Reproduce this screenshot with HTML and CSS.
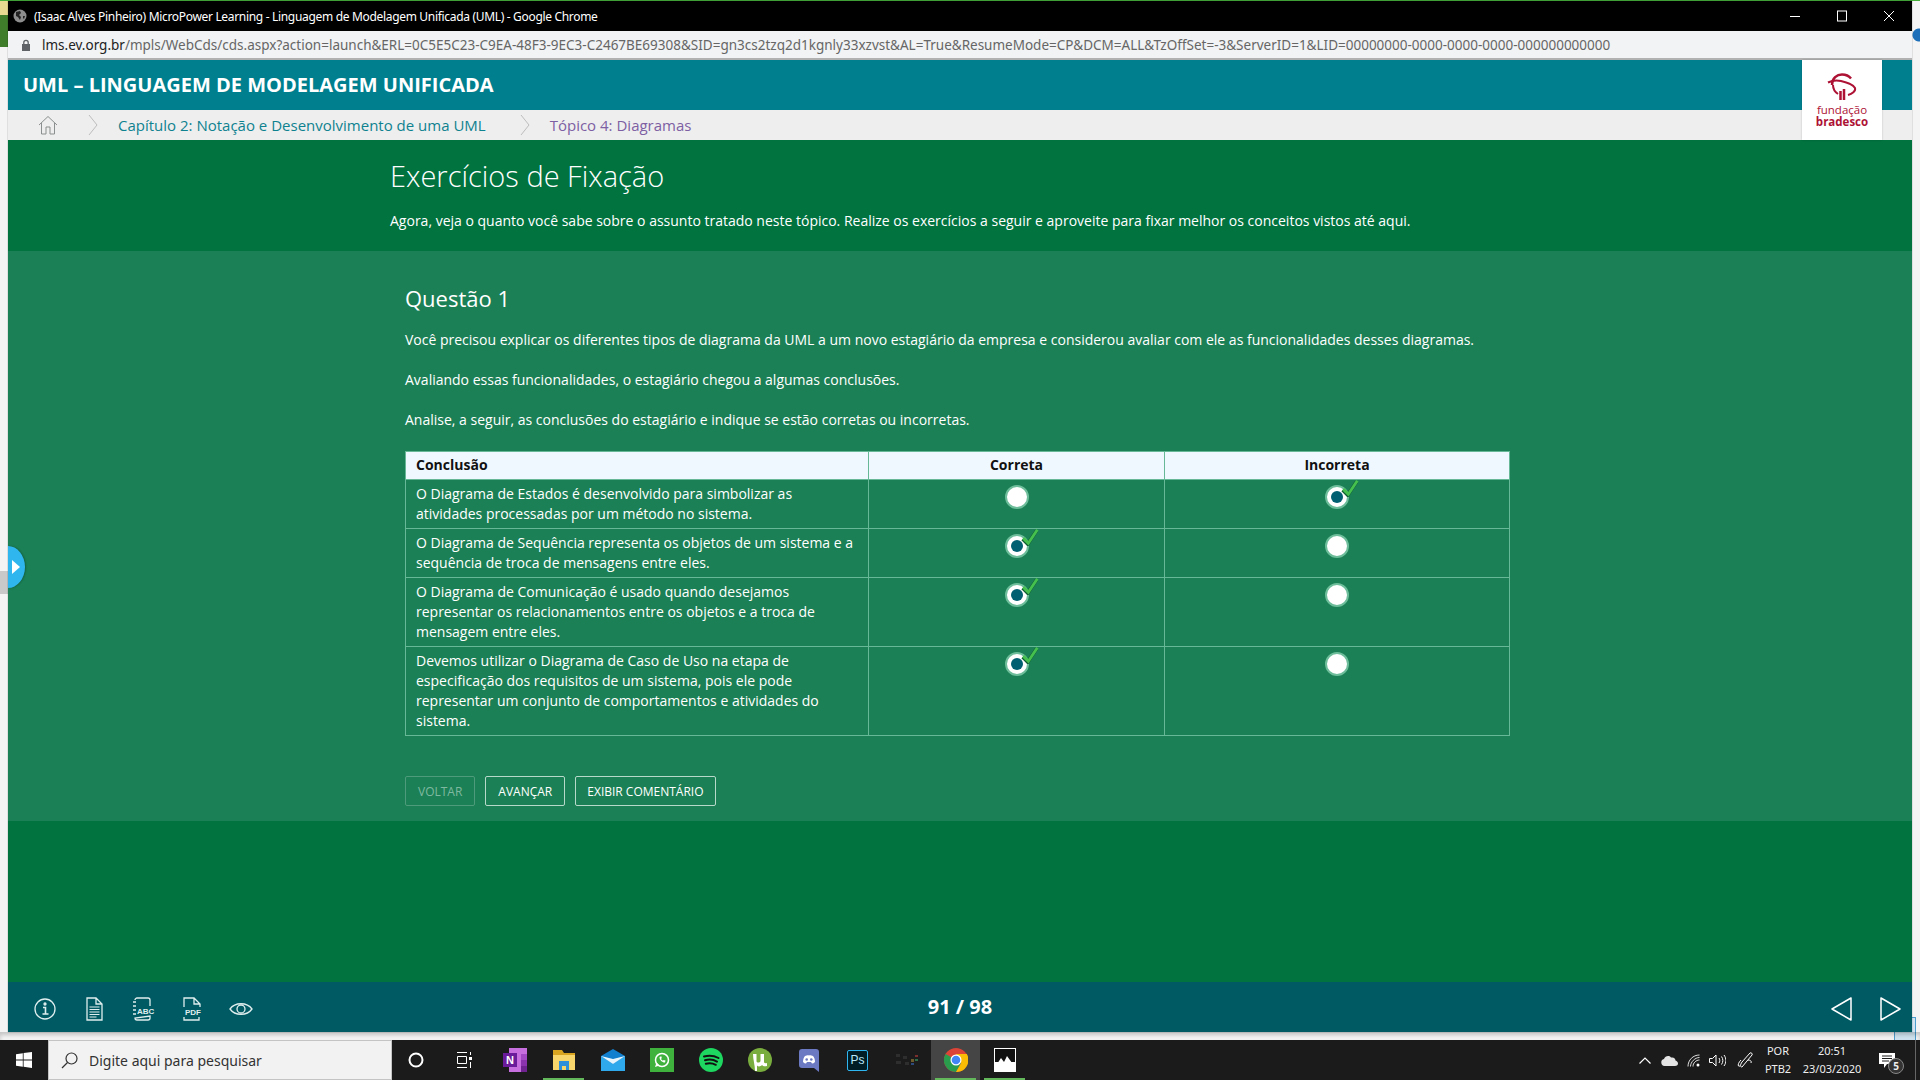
FILE: index.html
```html
<!DOCTYPE html>
<html>
<head>
  <meta charset="utf-8">
  <title>UML - Linguagem de Modelagem Unificada</title>
  <link rel="stylesheet" href="styles.css">
</head>
<body>
<svg class="defs" width="0" height="0">
  <symbol id="check" viewBox="0 0 16 16">
    <path d="M2 9l4.500 4.500L14.500 1.500" fill="none" stroke="#0f5c33" stroke-width="3.200" transform="translate(-0.500 0.800)"/>
    <path d="M2 9l4.500 4.500L14.500 1.500" fill="none" stroke="#45c04f" stroke-width="2.600"/>
  </symbol>
</svg>

<div class="screen">
  <div class="snap-hint"></div>

  <div class="window">
    <div class="titlebar">
      <svg class="globe" width="14" height="14" viewBox="0 0 14 14"><circle cx="7" cy="7" r="6.500" fill="#8d8d8d"/><path d="M3 3l4-1 1 2-2 2 2 2-1 3-2-3-2-1zM10 7l2 0-1 3-1-1z" fill="#222"/></svg>
      <span class="titlebar-text">(Isaac Alves Pinheiro) MicroPower Learning - Linguagem de Modelagem Unificada (UML) - Google Chrome</span>
      <div class="win-controls">
        <svg width="12" height="12" viewBox="0 0 12 12"><path d="M1 6.500h10" stroke="#fff"/></svg>
        <svg width="12" height="12" viewBox="0 0 12 12"><rect x="1.500" y="1" width="9" height="10" fill="none" stroke="#fff"/></svg>
        <svg width="12" height="12" viewBox="0 0 12 12"><path d="M1 1l10 10M11 1L1 11" stroke="#fff"/></svg>
      </div>
    </div>

    <div class="addressbar">
      <svg width="10" height="12" viewBox="0 0 10 12"><rect x="1" y="5" width="8" height="7" fill="#5f6368"/><path d="M2.800 5V3.500a2.200 2.200 0 0 1 4.400 0V5" fill="none" stroke="#5f6368" stroke-width="1.300"/></svg>
      <span class="url"><span class="url-host">lms.ev.org.br</span>/mpls/WebCds/cds.aspx?action=launch&amp;ERL=0C5E5C23-C9EA-48F3-9EC3-C2467BE69308&amp;SID=gn3cs2tzq2d1kgnly33xzvst&amp;AL=True&amp;ResumeMode=CP&amp;DCM=ALL&amp;TzOffSet=-3&amp;ServerID=1&amp;LID=00000000-0000-0000-0000-000000000000</span>
    </div>

    <div class="course-bar">
      <h1>UML – LINGUAGEM DE MODELAGEM UNIFICADA</h1>
    </div>

    <div class="breadcrumb">
      <svg class="home" width="20" height="20" viewBox="0 0 20 20" fill="none" stroke="#8b8f8f"><path d="M1 10L10 1.500 19 10M3.500 8v11h4.500v-7h4v7h4.500V8"/></svg>
      <svg class="crumb-sep" width="10" height="22" viewBox="0 0 10 22" fill="none" stroke="#bdbdbd"><path d="M1 1l8 10-8 10"/></svg>
      <span class="crumb-chapter">Capítulo 2: Notação e Desenvolvimento de uma UML</span>
      <svg class="crumb-sep" width="10" height="22" viewBox="0 0 10 22" fill="none" stroke="#bdbdbd"><path d="M1 1l8 10-8 10"/></svg>
      <span class="crumb-topic">Tópico 4: Diagramas</span>
    </div>

    <div class="logo">
      <svg width="30" height="28" viewBox="0 0 30 28" fill="none" stroke="#ad1235">
        <path d="M1 9.500C6 7 10 7 14 8c6 1.500 12 3 14 7 1 3-3 6-7 7" stroke-width="2"/>
        <path d="M5 12C5 5 10 1.500 15 1.500c4 0 7 1.500 9 4" stroke-width="2.500"/>
        <path d="M6 12c0 4 2 7 5 9" stroke-width="2"/>
        <path d="M13.500 18v9M17 16v11" stroke-width="2.500"/>
      </svg>
      <span class="logo-light">fundação</span>
      <span class="logo-bold">bradesco</span>
    </div>

    <div class="side-tab">
      <svg width="8" height="14" viewBox="0 0 8 14"><path d="M0 0l8 7-8 7z" fill="#fff"/></svg>
    </div>

    <section class="intro">
      <h2>Exercícios de Fixação</h2>
      <p>Agora, veja o quanto você sabe sobre o assunto tratado neste tópico. Realize os exercícios a seguir e aproveite para fixar melhor os conceitos vistos até aqui.</p>
    </section>

    <section class="question">
      <h3>Questão 1</h3>
      <p>Você precisou explicar os diferentes tipos de diagrama da UML a um novo estagiário da empresa e considerou avaliar com ele as funcionalidades desses diagramas.</p>
      <p>Avaliando essas funcionalidades, o estagiário chegou a algumas conclusões.</p>
      <p>Analise, a seguir, as conclusões do estagiário e indique se estão corretas ou incorretas.</p>

      <table class="answers">
        <colgroup><col class="col-text"><col class="col-a"><col class="col-b"></colgroup>
        <tr>
          <th class="th-left">Conclusão</th>
          <th>Correta</th>
          <th>Incorreta</th>
        </tr>
        <tr>
          <td>O Diagrama de Estados é desenvolvido para simbolizar as atividades processadas por um método no sistema.</td>
          <td class="opt"><span class="radio"></span></td>
          <td class="opt"><span class="radio selected"><svg class="tick"><use href="#check"/></svg></span></td>
        </tr>
        <tr>
          <td>O Diagrama de Sequência representa os objetos de um sistema e a sequência de troca de mensagens entre eles.</td>
          <td class="opt"><span class="radio selected"><svg class="tick"><use href="#check"/></svg></span></td>
          <td class="opt"><span class="radio"></span></td>
        </tr>
        <tr>
          <td>O Diagrama de Comunicação é usado quando desejamos representar os relacionamentos entre os objetos e a troca de mensagem entre eles.</td>
          <td class="opt"><span class="radio selected"><svg class="tick"><use href="#check"/></svg></span></td>
          <td class="opt"><span class="radio"></span></td>
        </tr>
        <tr>
          <td>Devemos utilizar o Diagrama de Caso de Uso na etapa de especificação dos requisitos de um sistema, pois ele pode representar um conjunto de comportamentos e atividades do sistema.</td>
          <td class="opt"><span class="radio selected"><svg class="tick"><use href="#check"/></svg></span></td>
          <td class="opt"><span class="radio"></span></td>
        </tr>
      </table>

      <div class="actions">
        <button class="btn btn-off">VOLTAR</button>
        <button class="btn">AVANÇAR</button>
        <button class="btn">EXIBIR COMENTÁRIO</button>
      </div>
    </section>

    <div class="filler"></div>

    <footer class="player">
      <div class="tools">
        <svg width="24" height="24" viewBox="0 0 24 24" fill="none" stroke="#dfeeee" stroke-width="1.300"><circle cx="12" cy="12" r="10"/><path d="M10 10.500h2.500V17M9.500 17h6" stroke-width="1.600"/><circle cx="12" cy="7" r="1" fill="#dfeeee"/></svg>
        <svg width="24" height="24" viewBox="0 0 24 24" fill="none" stroke="#dfeeee" stroke-width="1.300"><path d="M5 1h9l6 6v16H5zM14 1v6h6"/><path d="M7.500 10h10M7.500 12.500h10M7.500 15h10M7.500 17.500h10M7.500 20h7" stroke-width="1.200"/></svg>
        <svg width="24" height="24" viewBox="0 0 24 24" fill="none" stroke="#dfeeee" stroke-width="1.300"><path d="M4 3c0-1 1-2 2-2h11c1 0 2 1 2 2v6M19 19v2c0 1-1 2-2 2H6c-1 0-2-1-2-2z"/><path d="M2 5h3M2 9h3M2 13h3M2 17h3"/><text x="6" y="17" class="tool-label">ABC</text></svg>
        <svg width="24" height="24" viewBox="0 0 24 24" fill="none" stroke="#dfeeee" stroke-width="1.300"><path d="M4 10V1h10l6 6v3M14 1v6h6M4 20v3h15v-3"/><text x="5" y="18" class="tool-label">PDF</text></svg>
        <svg width="24" height="24" viewBox="0 0 24 24" fill="none" stroke="#dfeeee" stroke-width="1.300"><path d="M1 12c5-7 17-7 22 0-5 7-17 7-22 0z"/><circle cx="12" cy="12" r="4"/></svg>
      </div>
      <div class="pages">91 / 98</div>
      <div class="pager">
        <svg width="21" height="24" viewBox="0 0 21 24" fill="none" stroke="#fff" stroke-width="1.500" stroke-linejoin="round"><path d="M20 1v22L1 12z"/></svg>
        <svg width="21" height="24" viewBox="0 0 21 24" fill="none" stroke="#fff" stroke-width="1.500" stroke-linejoin="round"><path d="M1 1v22l19-11z"/></svg>
      </div>
    </footer>
  </div>

  <div class="under-window"></div>

  <div class="taskbar">
    <div class="start">
      <svg width="16" height="16" viewBox="0 0 16 16" fill="#fff"><path d="M0 2.200l6.800-1v6.400H0zM7.600 1.100L16 0v7.600H7.600zM0 8.400h6.800v6.400l-6.800-1zM7.600 8.400H16V16l-8.400-1.200z"/></svg>
    </div>
    <div class="search">
      <svg width="17" height="17" viewBox="0 0 17 17" fill="none" stroke="#333" stroke-width="1.200"><circle cx="10.500" cy="6.500" r="5.500"/><path d="M6.500 10.500L1 16"/></svg>
      <span>Digite aqui para pesquisar</span>
    </div>
    <div class="task-btn">
      <svg width="16" height="16" viewBox="0 0 16 16" fill="none" stroke="#fff" stroke-width="2"><circle cx="8" cy="8" r="6.500"/></svg>
    </div>
    <div class="task-btn">
      <svg width="16" height="18" viewBox="0 0 16 18" fill="none" stroke="#fff"><path d="M1 1.500h10M1 16.500h10M1.500 5.500h9v7h-9z"/><rect x="13" y="6" width="3" height="3" fill="#fff" stroke="none"/><path d="M14.500 1v3M14.500 11v6"/></svg>
    </div>
    <div class="apps">
      <div class="task-btn">
        <svg width="24" height="24" viewBox="0 0 24 24"><rect x="6" y="0" width="18" height="24" fill="#c86fe0"/><rect x="18" y="6" width="6" height="6" fill="#a349c4"/><rect x="18" y="12" width="6" height="6" fill="#8b33ad"/><rect x="18" y="18" width="6" height="6" fill="#6f2390"/><rect x="0" y="5" width="14" height="14" fill="#6a1b9a"/><text x="3" y="16" class="app-letter">N</text></svg>
      </div>
      <div class="task-btn open">
        <svg width="22" height="20" viewBox="0 0 22 20"><path d="M0 0h9l2 3h11v17H0z" fill="#d9a520"/><path d="M0 5h22v15H0z" fill="#f9d66c"/><path d="M6 11h10v9h-3v-4h-4v4H6z" fill="#2f8fd8"/></svg>
      </div>
      <div class="task-btn">
        <svg width="24" height="24" viewBox="0 0 24 24"><path d="M12 1l12 7v15H0V8z" fill="#1380cf"/><path d="M0 8l12 8 12-8v15H0z" fill="#30a8ec"/><path d="M0 8l12 8 12-8-12 3z" fill="#e8f5fd"/></svg>
      </div>
      <div class="task-btn">
        <svg width="24" height="24" viewBox="0 0 24 24"><rect width="24" height="24" fill="#3fb13d"/><circle cx="12" cy="12" r="6.500" fill="none" stroke="#fff" stroke-width="1.500"/><path d="M5 19l1.500-4.500 3 3zM9.500 9c0 3 2.500 5.500 5.500 5.500l.5-2-2-.5-.5.800c-1-.5-1.500-1-2-2l.8-.500-.5-2z" fill="#fff"/></svg>
      </div>
      <div class="task-btn">
        <svg width="24" height="24" viewBox="0 0 24 24"><circle cx="12" cy="12" r="12" fill="#1ed760"/><path d="M5 8.500c5-1.500 10-1 14.500 1.500M6 12.300c4-1.200 8.500-.8 12 1.300M6.800 15.800c3.500-1 7-.6 10 1" fill="none" stroke="#111" stroke-width="2" stroke-linecap="round"/></svg>
      </div>
      <div class="task-btn">
        <svg width="24" height="24" viewBox="0 0 24 24"><circle cx="12" cy="12" r="12" fill="#79ad3d"/><path d="M5 6h3.500v7c0 2 3.500 2 4 0V6H16v8c0 1 1 1.500 3 1v3c-2 .5-4 .5-5-1-2 2-4 1.500-5 .5V23H7C7 17 5 12 5 6z" fill="#fff"/></svg>
      </div>
      <div class="task-btn">
        <svg width="20" height="23" viewBox="0 0 20 23"><path d="M3 0h14c2 0 3 1 3 3v20l-5-4H3c-2 0-3-1-3-3V3c0-2 1-3 3-3z" fill="#6b78c2"/><path d="M4 13c0-3 1-5 2-6 2-1 3-1 4-.5 1-.5 2-.5 4 .5 1 1 2 3 2 6-1 1-2 1.500-3 1.500l-1-1.500H8l-1 1.500C6 14.500 5 14 4 13z" fill="#fff"/><circle cx="7.700" cy="10.500" r="1.300" fill="#6b78c2"/><circle cx="12.300" cy="10.500" r="1.300" fill="#6b78c2"/></svg>
      </div>
      <div class="task-btn">
        <div class="ps-icon">Ps</div>
      </div>
      <div class="task-btn">
        <svg width="22" height="14" viewBox="0 0 22 14" fill="#2e2e2e"><rect x="0" y="1" width="4" height="3"/><rect x="7" y="3" width="4" height="3"/><rect x="0" y="8" width="5" height="3"/><rect x="9" y="9" width="4" height="3"/><rect x="15" y="6" width="3" height="3" fill="#6d5b2c"/><rect x="19" y="2" width="3" height="2" fill="#7a2e2e"/><rect x="19" y="6" width="3" height="2" fill="#2e6d4a"/><rect x="15" y="10" width="3" height="2" fill="#2e4a7a"/></svg>
      </div>
      <div class="task-btn open active">
        <svg width="24" height="24" viewBox="0 0 24 24"><circle cx="12" cy="12" r="12" fill="#db4437"/><path d="M12 12L1.600 6A12 12 0 0 0 12 24l5-9z" fill="#2a9d4c"/><path d="M12 6h10.800A12 12 0 0 1 12 24l5.200-9z" fill="#fbbc05"/><circle cx="12" cy="12" r="5.500" fill="#fff"/><circle cx="12" cy="12" r="4.300" fill="#4285f4"/></svg>
      </div>
      <div class="task-btn open">
        <svg width="22" height="24" viewBox="0 0 22 24"><rect width="22" height="24" fill="#fff"/><rect x="1" y="1" width="20" height="13" fill="#111"/><path d="M1 19l6-9 3 4 3-6 8 11v1H1z" fill="#fff"/></svg>
      </div>
    </div>

    <div class="tray">
      <div class="tray-item w-24">
        <svg width="12" height="7" viewBox="0 0 12 7" fill="none" stroke="#fff" stroke-width="1.200"><path d="M0.500 6.500L6 1l5.500 5.500"/></svg>
      </div>
      <div class="tray-item w-25">
        <svg width="17" height="11" viewBox="0 0 17 11"><path d="M3.500 11a3.500 3.500 0 0 1-.5-6.900C4 1 8 0 10 2.500c3-.5 4.500 1 4.500 3 1.500.5 2.500 1.500 2.500 3S16 11 14 11z" fill="#e3e3e3"/></svg>
      </div>
      <div class="tray-item w-23">
        <svg width="13" height="13" viewBox="0 0 13 13" fill="none" stroke="#ddd"><path d="M1 12.500C1 6 6 1 12.500 1M3.500 12.500C3.500 8 8 3.500 12.500 3.500M6 12.500C6 9 9 6 12.500 6"/><circle cx="11" cy="11" r="1.500" fill="#fff" stroke="none"/></svg>
      </div>
      <div class="tray-item w-24">
        <svg width="17" height="13" viewBox="0 0 17 13" fill="none" stroke="#fff"><path d="M0.500 4.500h3L7 1v11L3.500 8.500h-3zM10 4c1 1.500 1 3.500 0 5M12.500 2.500c1.800 2.500 1.800 5.500 0 8M15 1c2.500 3.500 2.500 7.500 0 11"/></svg>
      </div>
      <div class="tray-item w-20 pen-gap">
        <svg width="17" height="17" viewBox="0 0 17 17" fill="none" stroke="#fff"><path d="M3 14c-3 1-2-3 1-6M5 15L15 3c1-1-1-3-2-2L5 10c-2 3-2 5 0 5zM11 8c2 0 4 1 3 3"/></svg>
      </div>
      <div class="tray-lang">POR<br>PTB2</div>
      <div class="tray-clock">20:51<br>23/03/2020</div>
      <div class="tray-notify">
        <svg width="16" height="15" viewBox="0 0 16 15"><path d="M0 0h16v11H8l-3 4v-4H0z" fill="#fff"/><path d="M3 3h10M3 5.500h10M3 8h7" stroke="#1b1b1b"/></svg>
        <span class="notify-count">5</span>
      </div>
      <div class="show-desktop"></div>
    </div>
  </div>
</div>
</body>
</html>
```

FILE: styles.css
```css
* {
  box-sizing: border-box;
}

html, body {
  margin: 0;
  padding: 0;
  height: 100%;
  overflow: hidden;
}

body {
  font-family: 'Open Sans', 'Noto Sans', sans-serif;
  font-size: 14px;
  color: #fff;
}

.defs {
  position: absolute;
}

.screen {
  position: relative;
  height: 1080px;
  display: flex;
  flex-direction: column;
  background:
    radial-gradient(circle at 1919px 34px, #1c6fb8 6px, transparent 7px),
    linear-gradient(to bottom, #e8d990 0, #e8d990 14px, #3f7d2a 14px, #3f7d2a 46px, #f4f4f4 46px, #f4f4f4 570px, #c9c9c9 570px, #c9c9c9 593px, #f4f4f4 593px) left top / 8px 100% no-repeat,
    #f4f4f4;
  border-top: 1px solid #45ad3a;
}

/* window */
.window {
  position: relative;
  flex: 1;
  margin: 0 8px 0 8px;
  display: flex;
  flex-direction: column;
  box-shadow: 0 0 1px rgba(0, 0, 0, 0.5);
}

.titlebar {
  height: 30px;
  background-color: #000;
  display: flex;
  align-items: center;
  padding-left: 5px;
  font-size: 12px;
}

.titlebar-text {
  margin-left: 7px;
  font-family: 'Noto Sans', sans-serif;
  letter-spacing: -0.32px;
}

.win-controls {
  margin-left: auto;
  display: flex;
  gap: 35px;
  padding-right: 17px;
}

.addressbar {
  height: 29px;
  background-color: #f1f3f4;
  border-bottom: 2px solid #b1b1b1;
  display: flex;
  align-items: center;
  padding-left: 13px;
  color: #666;
  font-family: 'Noto Sans', sans-serif;
  font-size: 13.500px;
}

.url {
  margin-left: 11px;
  white-space: nowrap;
}

.url-host {
  color: #222;
}

.course-bar {
  height: 50px;
  background-color: #00808f;
  display: flex;
  align-items: center;
  padding: 0 0 2px 15px;
}

.course-bar h1 {
  margin: 0;
  font-size: 20px;
  font-weight: 700;
}

.breadcrumb {
  height: 30px;
  background-color: #eee;
  display: flex;
  align-items: center;
  padding-left: 30px;
  font-size: 15px;
}

.crumb-sep {
  margin: 0 20px 0 30px;
}

.crumb-chapter + .crumb-sep {
  margin-left: 34px;
}

.crumb-chapter {
  color: #0f8290;
}

.crumb-topic {
  color: #7d5fa3;
}

.logo {
  position: absolute;
  top: 59px;
  left: 1794px;
  width: 80px;
  height: 80px;
  background-color: #fff;
  box-shadow: 0 0 2px rgba(0, 0, 0, 0.2);
  display: flex;
  flex-direction: column;
  align-items: center;
  padding-top: 13px;
  color: #ad1235;
  font-size: 11.500px;
  line-height: 13px;
}

.logo-light {
  margin-top: 2px;
  font-weight: 400;
}

.logo-bold {
  font-weight: 700;
  margin-top: -1px;
}

.side-tab {
  position: absolute;
  left: 0;
  top: 545px;
  width: 17px;
  height: 42px;
  background-color: #2fb6ef;
  border-radius: 0 17px 17px 0 / 0 21px 21px 0;
  box-shadow: 1px 0 2px rgba(0, 0, 0, 0.25);
  display: flex;
  align-items: center;
  padding-left: 4px;
}

/* page */
.intro {
  height: 111px;
  background-color: #00733f;
  padding: 17px 0 0 382px;
}

.intro h2 {
  margin: 0;
  font-size: 29px;
  line-height: 38px;
  font-weight: 300;
}

.intro p {
  margin: 16px 0 0;
  line-height: 20px;
}

.question {
  background-color: #1b8055;
  padding: 33px 0 15px 397px;
}

.question h3 {
  margin: 0 0 18px;
  font-size: 22px;
  line-height: 28px;
  font-weight: 400;
}

.question p {
  margin: 0 0 20px;
  line-height: 20px;
}

.answers {
  width: 1104px;
  margin-top: 21px;
  border-collapse: collapse;
  table-layout: fixed;
  line-height: 20px;
}

.col-text {
  width: 463px;
}

.col-a {
  width: 296px;
}

.col-b {
  width: 345px;
}

.answers th,
.answers td {
  border: 1px solid #67b897;
  padding: 4px 10px;
  vertical-align: top;
}

.answers th {
  background-color: #f0f8ff;
  color: #111;
  font-weight: 700;
  height: 28px;
  line-height: 20px;
  padding-top: 3px;
}

.answers .th-left {
  text-align: left;
}

.answers td.opt {
  text-align: center;
  padding: 5px 0 0;
}

.radio {
  position: relative;
  display: inline-block;
  vertical-align: top;
  width: 24px;
  height: 24px;
  border-radius: 50%;
  background-color: #fff;
  border: 2px solid #6dbd9b;
}

.radio.selected::before {
  content: "";
  position: absolute;
  left: 4px;
  top: 4px;
  width: 12px;
  height: 12px;
  border-radius: 50%;
  background-color: #005f70;
}

.tick {
  position: absolute;
  left: 14px;
  top: -8px;
  width: 18px;
  height: 18px;
}

.actions {
  display: flex;
  gap: 10px;
  margin-top: 40px;
}

.btn {
  height: 30px;
  padding: 0 12px;
  font-family: inherit;
  font-size: 12px;
  color: #fff;
  background-color: transparent;
  border: 1px solid #b7d9ca;
  border-radius: 2px;
}

.btn:last-child {
  padding: 0 11px;
}

.btn-off {
  color: #7fb8a0;
  border-color: #4d9b7b;
}

.filler {
  flex: 1;
  background-color: #00733f;
}

/* bottom bar of the player */
.player {
  height: 50px;
  background-color: #005a64;
  display: grid;
  grid-template-columns: 1fr auto 1fr;
  align-items: center;
}

.tools {
  display: flex;
  gap: 25px;
  padding-left: 25px;
  padding-top: 4px;
}

.tool-label {
  font-family: 'Liberation Sans', sans-serif;
  font-size: 8px;
  font-weight: 700;
  fill: #dfeeee;
  stroke: none;
}

.pages {
  font-size: 20px;
  font-weight: 700;
  margin-top: -2px;
}

.pager {
  display: flex;
  justify-content: flex-end;
  gap: 28px;
  padding-right: 11px;
  padding-top: 4px;
}

.under-window {
  position: relative;
  height: 8px;
  background: transparent;
  box-shadow: inset 0 3px 4px rgba(0, 0, 0, 0.2);
}

.snap-hint {
  position: absolute;
  left: 1894px;
  top: 1016px;
  width: 22px;
  height: 24px;
  background-color: #cfe4f0;
  border: 1px solid #4c9ccc;
  z-index: 1;
}

.window,
.under-window,
.taskbar {
  z-index: 2;
}

/* windows taskbar */
.taskbar {
  position: relative;
  height: 40px;
  background-color: #1b1b1b;
  display: flex;
  align-items: stretch;
}

.start {
  width: 48px;
  display: flex;
  align-items: center;
  justify-content: center;
}

.search {
  width: 344px;
  background-color: #f2f2f2;
  border: 1px solid #c4c4c4;
  display: flex;
  align-items: center;
  padding-left: 12px;
  color: #333;
  font-family: 'Noto Sans', sans-serif;
  font-size: 14px;
}

.search span {
  margin-left: 11px;
}

.task-btn {
  width: 48px;
  display: flex;
  align-items: center;
  justify-content: center;
  position: relative;
}

.apps {
  display: flex;
  margin-left: 2px;
}

.apps .task-btn {
  width: 49px;
}

.task-btn.active {
  background-color: #454545;
}

.task-btn.open::after {
  content: "";
  position: absolute;
  left: 4px;
  right: 4px;
  bottom: 0;
  height: 2px;
  background-color: #62b85a;
}

.ps-icon {
  width: 21px;
  height: 21px;
  background-color: #001d26;
  border: 1.500px solid #2fb6f0;
  border-radius: 2px;
  color: #b9e8fb;
  font-family: 'Liberation Sans', sans-serif;
  font-size: 12px;
  line-height: 18px;
  text-align: center;
}

.app-letter {
  font-family: 'Liberation Sans', sans-serif;
  font-size: 11px;
  font-weight: 700;
  fill: #fff;
}

.tray {
  margin-left: auto;
  display: flex;
  align-items: center;
  color: #eee;
  font-family: 'Noto Sans', sans-serif;
  font-size: 11px;
  line-height: 18px;
  text-align: center;
}

.tray-item {
  display: flex;
  justify-content: center;
  align-items: center;
}

.w-20 { width: 20px; }
.w-23 { width: 23px; }
.w-24 { width: 24px; }
.w-25 { width: 25px; }

.pen-gap {
  margin-left: 6px;
}

.tray-lang {
  width: 46px;
}

.tray-clock {
  width: 66px;
  padding-right: 4px;
  white-space: nowrap;
}

.tray-notify {
  position: relative;
  width: 40px;
  height: 40px;
  display: flex;
  align-items: center;
  justify-content: center;
}

.notify-count {
  position: absolute;
  left: 21px;
  top: 18px;
  width: 16px;
  height: 16px;
  border-radius: 50%;
  background-color: #333;
  border: 1px solid #888;
  font-size: 10px;
  line-height: 14px;
  font-weight: 700;
}

.show-desktop {
  width: 5px;
  height: 40px;
  margin-left: 8px;
  border-left: 1px solid #666;
}
```
